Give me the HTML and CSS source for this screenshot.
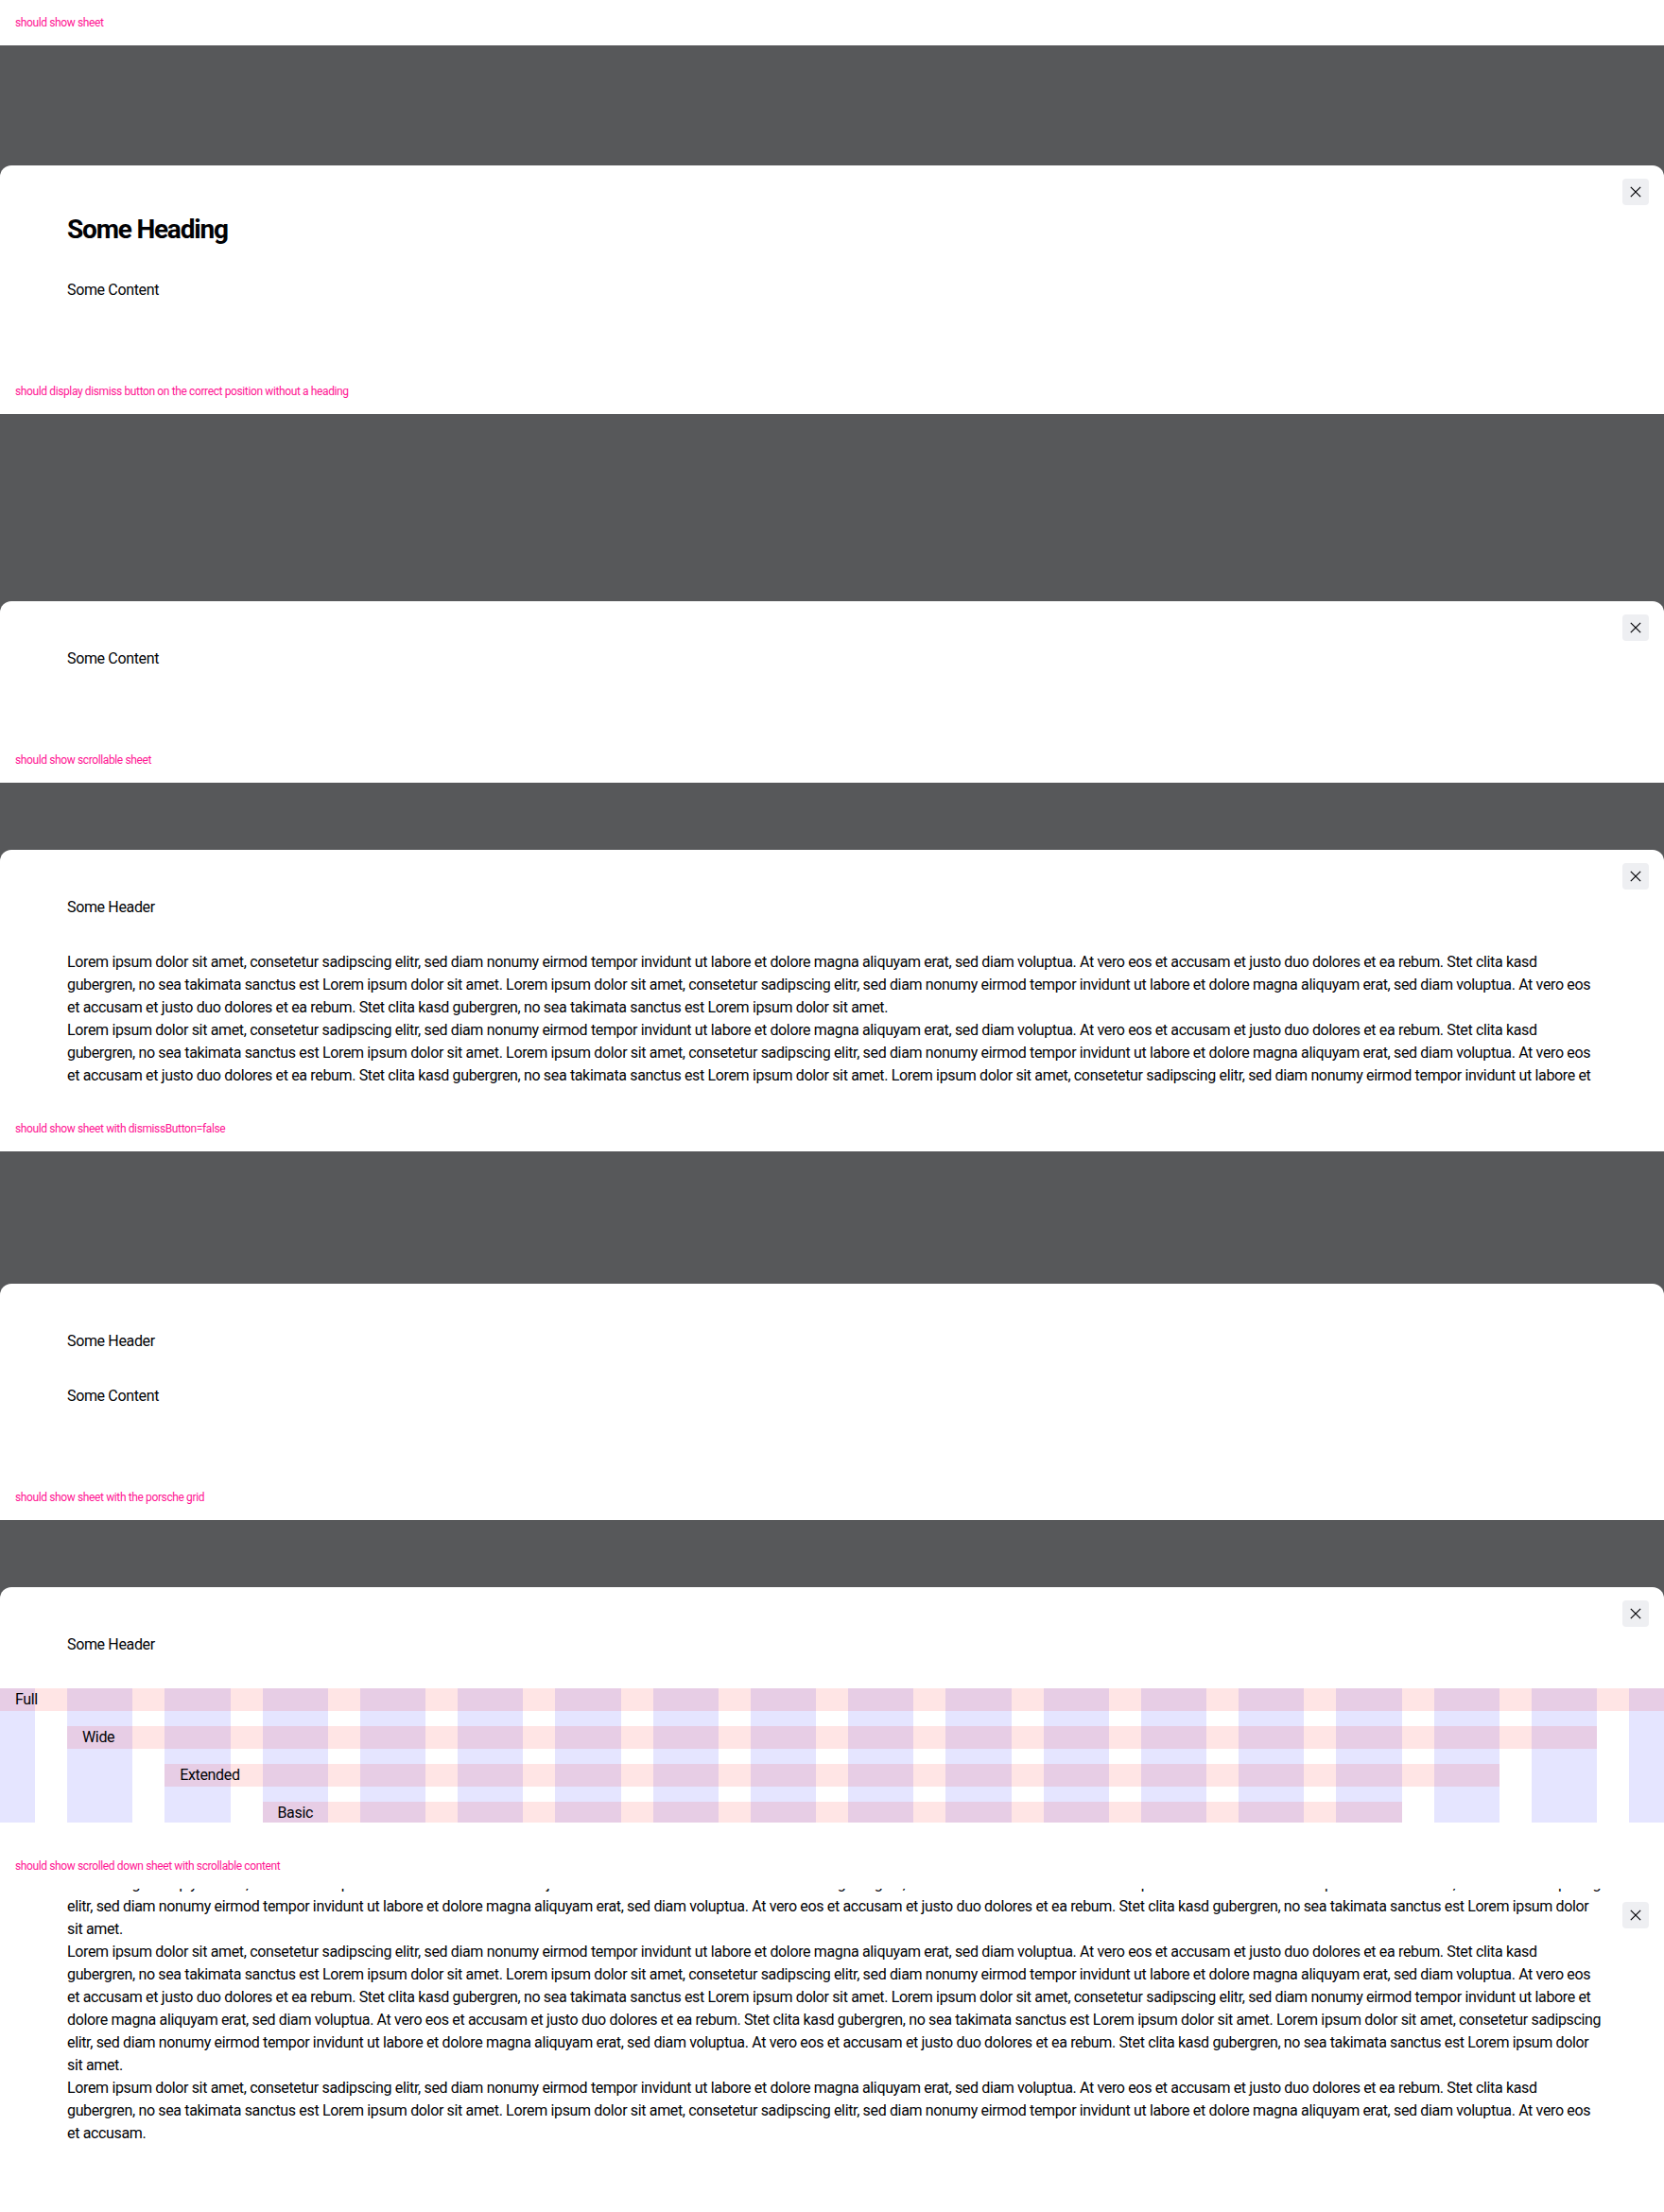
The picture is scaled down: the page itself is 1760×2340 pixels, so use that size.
FILE: index.html
```html
<!DOCTYPE html>
<html lang="en">
<head>
<meta charset="utf-8">
<title>Sheet</title>
<link rel="stylesheet" href="styles.css">
</head>
<body>

<section class="case">
  <div class="case__label">should show sheet</div>
  <div class="stage">
    <div class="sheet">
      <h2 class="sheet__heading">Some Heading</h2>
      <p class="text">Some Content</p>
      <button class="dismiss" type="button" aria-label="Dismiss sheet"><svg width="12" height="12" viewBox="0 0 12 12"><path d="M0.8 0.8L11.2 11.2M11.2 0.8L0.8 11.2" stroke="#010205" stroke-width="1.2" fill="none"/></svg></button>
    </div>
  </div>
</section>

<section class="case">
  <div class="case__label">should display dismiss button on the correct position without a heading</div>
  <div class="stage">
    <div class="sheet">
      <p class="text">Some Content</p>
      <button class="dismiss" type="button" aria-label="Dismiss sheet"><svg width="12" height="12" viewBox="0 0 12 12"><path d="M0.8 0.8L11.2 11.2M11.2 0.8L0.8 11.2" stroke="#010205" stroke-width="1.2" fill="none"/></svg></button>
    </div>
  </div>
</section>

<section class="case">
  <div class="case__label">should show scrollable sheet</div>
  <div class="stage">
    <div class="sheet sheet--clipped">
      <div class="sheet__scroll">
        <p class="text">Some Header</p>
        <div class="lorem">
          <p class="text">Lorem ipsum dolor sit amet, consetetur sadipscing elitr, sed diam nonumy eirmod tempor invidunt ut labore et dolore magna aliquyam erat, sed diam voluptua. At vero eos et accusam et justo duo dolores et ea rebum. Stet clita kasd<br>gubergren, no sea takimata sanctus est Lorem ipsum dolor sit amet. Lorem ipsum dolor sit amet, consetetur sadipscing elitr, sed diam nonumy eirmod tempor invidunt ut labore et dolore magna aliquyam erat, sed diam voluptua. At vero eos<br>et accusam et justo duo dolores et ea rebum. Stet clita kasd gubergren, no sea takimata sanctus est Lorem ipsum dolor sit amet.</p>
          <p class="text">Lorem ipsum dolor sit amet, consetetur sadipscing elitr, sed diam nonumy eirmod tempor invidunt ut labore et dolore magna aliquyam erat, sed diam voluptua. At vero eos et accusam et justo duo dolores et ea rebum. Stet clita kasd<br>gubergren, no sea takimata sanctus est Lorem ipsum dolor sit amet. Lorem ipsum dolor sit amet, consetetur sadipscing elitr, sed diam nonumy eirmod tempor invidunt ut labore et dolore magna aliquyam erat, sed diam voluptua. At vero eos<br>et accusam et justo duo dolores et ea rebum. Stet clita kasd gubergren, no sea takimata sanctus est Lorem ipsum dolor sit amet. Lorem ipsum dolor sit amet, consetetur sadipscing elitr, sed diam nonumy eirmod tempor invidunt ut labore et</p>
        </div>
      </div>
      <button class="dismiss" type="button" aria-label="Dismiss sheet"><svg width="12" height="12" viewBox="0 0 12 12"><path d="M0.8 0.8L11.2 11.2M11.2 0.8L0.8 11.2" stroke="#010205" stroke-width="1.2" fill="none"/></svg></button>
    </div>
  </div>
</section>

<section class="case">
  <div class="case__label">should show sheet with dismissButton=false</div>
  <div class="stage">
    <div class="sheet">
      <p class="text">Some Header</p>
      <p class="text">Some Content</p>
    </div>
  </div>
</section>

<section class="case">
  <div class="case__label">should show sheet with the porsche grid</div>
  <div class="stage">
    <div class="sheet sheet--clipped">
      <div class="sheet__scroll">
        <p class="text">Some Header</p>
        <div class="grid">
          <span class="grid__col"></span><span class="grid__col"></span><span class="grid__col"></span><span class="grid__col"></span><span class="grid__col"></span><span class="grid__col"></span><span class="grid__col"></span><span class="grid__col"></span><span class="grid__col"></span><span class="grid__col"></span><span class="grid__col"></span><span class="grid__col"></span><span class="grid__col"></span><span class="grid__col"></span><span class="grid__col"></span><span class="grid__col"></span><span class="grid__col"></span><span class="grid__col"></span>
          <div class="grid__row grid__row--full">Full</div>
          <div class="grid__row grid__row--wide">Wide</div>
          <div class="grid__row grid__row--extended">Extended</div>
          <div class="grid__row grid__row--basic">Basic</div>
        </div>
      </div>
      <button class="dismiss" type="button" aria-label="Dismiss sheet"><svg width="12" height="12" viewBox="0 0 12 12"><path d="M0.8 0.8L11.2 11.2M11.2 0.8L0.8 11.2" stroke="#010205" stroke-width="1.2" fill="none"/></svg></button>
    </div>
  </div>
</section>

<section class="case">
  <div class="case__label">should show scrolled down sheet with scrollable content</div>
  <div class="stage">
    <div class="sheet sheet--tall">
      <div class="lorem">
        <p class="text">dolore magna aliquyam erat, sed diam voluptua. At vero eos et accusam et justo duo dolores et ea rebum. Stet clita kasd gubergren, no sea takimata sanctus est Lorem ipsum dolor sit amet. Lorem ipsum dolor sit amet, consetetur sadipscing<br>elitr, sed diam nonumy eirmod tempor invidunt ut labore et dolore magna aliquyam erat, sed diam voluptua. At vero eos et accusam et justo duo dolores et ea rebum. Stet clita kasd gubergren, no sea takimata sanctus est Lorem ipsum dolor<br>sit amet.</p>
        <p class="text">Lorem ipsum dolor sit amet, consetetur sadipscing elitr, sed diam nonumy eirmod tempor invidunt ut labore et dolore magna aliquyam erat, sed diam voluptua. At vero eos et accusam et justo duo dolores et ea rebum. Stet clita kasd<br>gubergren, no sea takimata sanctus est Lorem ipsum dolor sit amet. Lorem ipsum dolor sit amet, consetetur sadipscing elitr, sed diam nonumy eirmod tempor invidunt ut labore et dolore magna aliquyam erat, sed diam voluptua. At vero eos<br>et accusam et justo duo dolores et ea rebum. Stet clita kasd gubergren, no sea takimata sanctus est Lorem ipsum dolor sit amet. Lorem ipsum dolor sit amet, consetetur sadipscing elitr, sed diam nonumy eirmod tempor invidunt ut labore et<br>dolore magna aliquyam erat, sed diam voluptua. At vero eos et accusam et justo duo dolores et ea rebum. Stet clita kasd gubergren, no sea takimata sanctus est Lorem ipsum dolor sit amet. Lorem ipsum dolor sit amet, consetetur sadipscing<br>elitr, sed diam nonumy eirmod tempor invidunt ut labore et dolore magna aliquyam erat, sed diam voluptua. At vero eos et accusam et justo duo dolores et ea rebum. Stet clita kasd gubergren, no sea takimata sanctus est Lorem ipsum dolor<br>sit amet.</p>
        <p class="text">Lorem ipsum dolor sit amet, consetetur sadipscing elitr, sed diam nonumy eirmod tempor invidunt ut labore et dolore magna aliquyam erat, sed diam voluptua. At vero eos et accusam et justo duo dolores et ea rebum. Stet clita kasd<br>gubergren, no sea takimata sanctus est Lorem ipsum dolor sit amet. Lorem ipsum dolor sit amet, consetetur sadipscing elitr, sed diam nonumy eirmod tempor invidunt ut labore et dolore magna aliquyam erat, sed diam voluptua. At vero eos<br>et accusam.</p>
      </div>
    </div>
    <button class="dismiss" type="button" aria-label="Dismiss sheet"><svg width="12" height="12" viewBox="0 0 12 12"><path d="M0.8 0.8L11.2 11.2M11.2 0.8L0.8 11.2" stroke="#010205" stroke-width="1.2" fill="none"/></svg></button>
  </div>
</section>

</body>
</html>
```

FILE: styles.css
```css
* {
  box-sizing: border-box;
}

html,
body {
  margin: 0;
  padding: 0;
  background: #ffffff;
}

body {
  font-family: Roboto, "Liberation Sans", Arial, sans-serif;
  color: #010205;
}

.case {
  height: 390px;
  display: flex;
  flex-direction: column;
}

.case__label {
  flex: none;
  height: 48px;
  display: flex;
  align-items: center;
  padding-left: 16px;
  font-size: 12px;
  line-height: 16px;
  letter-spacing: -0.38px;
  color: #ff1493;
}

.stage {
  position: relative;
  flex: 1 1 auto;
  min-height: 0;
  display: flex;
  flex-direction: column;
  justify-content: flex-end;
  overflow: hidden;
  background: #57585a;
}

.sheet {
  position: relative;
  flex: none;
  display: flex;
  flex-direction: column;
  gap: 34px;
  padding: 49px 71px 71px;
  background: #ffffff;
  border-radius: 12px 12px 0 0;
  font-size: 16px;
  line-height: 24px;
  letter-spacing: -0.35px;
}

.sheet--clipped {
  height: 271px;
  padding: 0 0 22px;
}

.sheet__scroll {
  height: 249px;
  overflow: hidden;
  display: flex;
  flex-direction: column;
  gap: 34px;
  padding: 49px 71px 0;
}

.sheet__heading {
  margin: 0;
  font-size: 28px;
  line-height: 37px;
  font-weight: 700;
  letter-spacing: -1.2px;
}

.text {
  margin: 0;
  white-space: nowrap;
}

.lorem {
  display: flex;
  flex-direction: column;
}

.dismiss {
  position: absolute;
  top: 14px;
  right: 16px;
  width: 28px;
  height: 28px;
  padding: 0;
  border: 0;
  border-radius: 4px;
  background: #eeeff2;
  display: flex;
  align-items: center;
  justify-content: center;
}

.dismiss svg {
  display: block;
}

/* porsche grid visualisation */
.grid {
  flex: none;
  display: grid;
  grid-template-columns: 37px repeat(16, minmax(0, 1fr)) 37px;
  grid-template-rows: repeat(4, 24px);
  column-gap: 34px;
  row-gap: 16px;
  margin: 0 -71px;
}

.grid__col {
  grid-row: 1 / -1;
  background: rgba(0, 0, 255, 0.1);
}

.grid__col:nth-child(1) { grid-column: 1; }
.grid__col:nth-child(2) { grid-column: 2; }
.grid__col:nth-child(3) { grid-column: 3; }
.grid__col:nth-child(4) { grid-column: 4; }
.grid__col:nth-child(5) { grid-column: 5; }
.grid__col:nth-child(6) { grid-column: 6; }
.grid__col:nth-child(7) { grid-column: 7; }
.grid__col:nth-child(8) { grid-column: 8; }
.grid__col:nth-child(9) { grid-column: 9; }
.grid__col:nth-child(10) { grid-column: 10; }
.grid__col:nth-child(11) { grid-column: 11; }
.grid__col:nth-child(12) { grid-column: 12; }
.grid__col:nth-child(13) { grid-column: 13; }
.grid__col:nth-child(14) { grid-column: 14; }
.grid__col:nth-child(15) { grid-column: 15; }
.grid__col:nth-child(16) { grid-column: 16; }
.grid__col:nth-child(17) { grid-column: 17; }
.grid__col:nth-child(18) { grid-column: 18; }

.grid__row {
  padding-left: 16px;
  background: rgba(255, 0, 0, 0.1);
  white-space: nowrap;
}

.grid__row--full { grid-row: 1; grid-column: 1 / -1; }
.grid__row--wide { grid-row: 2; grid-column: 2 / -2; }
.grid__row--extended { grid-row: 3; grid-column: 3 / -3; }
.grid__row--basic { grid-row: 4; grid-column: 4 / -4; }
```
